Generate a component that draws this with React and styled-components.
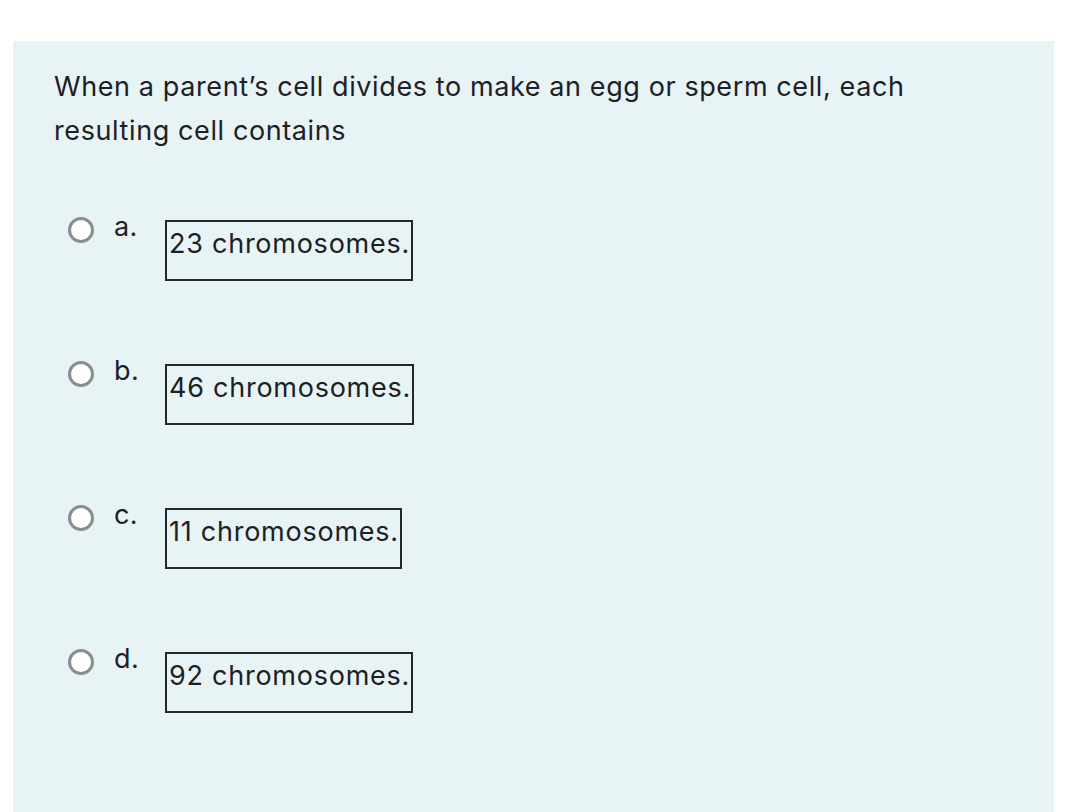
import React from "react";
import styled, { createGlobalStyle } from "styled-components";

const GlobalStyle = createGlobalStyle`
  html, body {
    margin: 0;
    padding: 0;
    background: #ffffff;
  }
  body {
    font-family: Inter, "Liberation Sans", Arial, sans-serif;
    color: #1d2125;
  }
`;

const Page = styled.div`
  padding: 41px 31px 0 13px;
  min-height: 812px;
  box-sizing: border-box;
  display: flex;
`;

const Panel = styled.div`
  flex: 1;
  background: #e7f3f5;
  padding: 24px 41px 100px 41px;
  min-height: 771px;
  box-sizing: border-box;
`;

const Question = styled.div`
  font-size: 27px;
  line-height: 44px;
  letter-spacing: 0.6px;
  max-width: 900px;
`;

const Answers = styled.div`
  margin-top: 67px;
  display: flex;
  flex-direction: column;
  gap: 83px;
`;

const Row = styled.label`
  display: flex;
  align-items: flex-start;
`;

const Radio = styled.span`
  flex: none;
  width: 20px;
  height: 20px;
  margin: -3px 0 0 14px;
  border: 3px solid #8a8d91;
  border-radius: 50%;
  background: #ffffff;
`;

const Letter = styled.span`
  width: 51px;
  margin-left: 20px;
  margin-top: -3px;
  font-size: 27px;
  line-height: 20px;
  letter-spacing: 0.4px;
`;

const Choice = styled.div`
  border: 2px solid #24282b;
  padding: 1px 1px 14px 2px;
  font-size: 27px;
  line-height: 42px;
  height: 42px;
  letter-spacing: 0.75px;
`;

const answers = [
  { letter: "a.", text: "23 chromosomes." },
  { letter: "b.", text: "46 chromosomes." },
  { letter: "c.", text: "11 chromosomes." },
  { letter: "d.", text: "92 chromosomes." },
];

export default function App() {
  return (
    <>
      <GlobalStyle />
      <Page>
        <Panel>
          <Question>
            When a parent’s cell divides to make an egg or sperm cell, each
            resulting cell contains
          </Question>
          <Answers>
            {answers.map((a) => (
              <Row key={a.letter}>
                <Radio />
                <Letter>{a.letter}</Letter>
                <Choice>{a.text}</Choice>
              </Row>
            ))}
          </Answers>
        </Panel>
      </Page>
    </>
  );
}
